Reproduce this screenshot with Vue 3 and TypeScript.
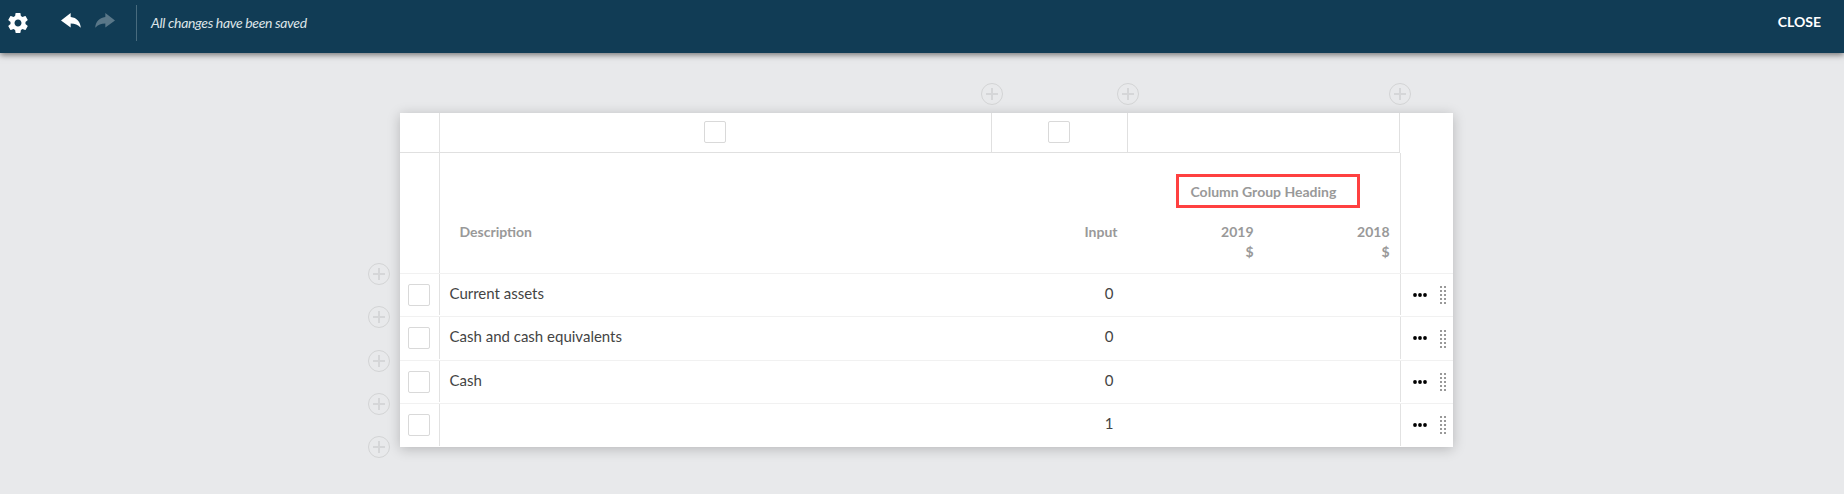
<script setup lang="ts">
interface Row {
  label: string
  input: string
}

const rows: Row[] = [
  { label: 'Current assets', input: '0' },
  { label: 'Cash and cash equivalents', input: '0' },
  { label: 'Cash', input: '0' },
  { label: '', input: '1' },
]
</script>

<template>
  <div class="page">
    <header class="topbar">
      <svg class="gear" viewBox="0 0 24 24" width="24" height="24">
        <path
          fill="#fff"
          d="M19.43 12.98c.04-.32.07-.64.07-.98s-.03-.66-.07-.98l2.11-1.65c.19-.15.24-.42.12-.64l-2-3.46c-.12-.22-.39-.3-.61-.22l-2.49 1c-.52-.4-1.08-.73-1.69-.98l-.38-2.65C14.46 2.18 14.25 2 14 2h-4c-.25 0-.46.18-.49.42l-.38 2.65c-.61.25-1.17.59-1.69.98l-2.49-1c-.23-.09-.49 0-.61.22l-2 3.46c-.13.22-.07.49.12.64l2.11 1.65c-.04.32-.07.65-.07.98s.03.66.07.98l-2.11 1.65c-.19.15-.24.42-.12.64l2 3.46c.12.22.39.3.61.22l2.49-1c.52.4 1.08.73 1.69.98l.38 2.65c.03.24.24.42.49.42h4c.25 0 .46-.18.49-.42l.38-2.65c.61-.25 1.17-.59 1.69-.98l2.49 1c.23.09.49 0 .61-.22l2-3.46c.12-.22.07-.49-.12-.64l-2.11-1.65zM12 15.5c-1.93 0-3.5-1.57-3.5-3.5s1.57-3.5 3.5-3.5 3.5 1.57 3.5 3.5-1.57 3.5-3.5 3.5z"
        />
      </svg>
      <svg class="undo" viewBox="3 5 18 15" width="20" height="15" preserveAspectRatio="none">
        <path fill="#fff" d="M11.7 9V5L3 12.4l8.7 7.2v-4.1c3.9 0 6.4 1.2 9.1 4.3-.3-5.8-3.5-10.2-9.1-10.8z" />
      </svg>
      <svg class="redo" viewBox="3 5 18 15" width="20" height="15" preserveAspectRatio="none">
        <path fill="#fff" d="M12.3 9V5l8.7 7.4-8.7 7.2v-4.1c-3.9 0-6.4 1.2-9.1 4.3.3-5.8 3.5-10.2 9.1-10.8z" />
      </svg>
      <span class="divider"></span>
      <span class="status">All changes have been saved</span>
      <span class="close">CLOSE</span>
    </header>

    <main class="sheet">
      <div class="selectors">
        <div class="cell gutter"></div>
        <div class="cell col-desc"><span class="check"></span><span class="plus"></span></div>
        <div class="cell col-input"><span class="check"></span><span class="plus"></span></div>
        <div class="cell col-group"><span class="plus"></span></div>
      </div>

      <div class="headings">
        <div class="gutter"></div>
        <div class="content">
          <div class="group-row"><div class="group">Column Group Heading</div></div>
          <div class="heading-row">
            <div class="h-desc">Description</div>
            <div class="h-num">Input</div>
            <div class="h-num">2019<br />$</div>
            <div class="h-num">2018<br />$</div>
          </div>
        </div>
      </div>

      <div v-for="(row, i) in rows" :key="i" class="row">
        <span class="plus"></span>
        <div class="gutter"><span class="check"></span></div>
        <div class="content">
          <span class="label">{{ row.label }}</span>
          <span class="value">{{ row.input }}</span>
        </div>
        <div class="tools">
          <svg class="more" width="14" height="4" viewBox="0 0 14 4">
            <circle cx="2" cy="2" r="1.9" />
            <circle cx="7" cy="2" r="1.9" />
            <circle cx="12" cy="2" r="1.9" />
          </svg>
          <span class="grip"><i v-for="n in 10" :key="n"></i></span>
        </div>
      </div>
      <span class="plus last"></span>
    </main>
  </div>
</template>

<style>
body {
  margin: 0;
  background: #e8e9eb;
}
</style>

<style scoped>
.page {
  height: 494px;
  overflow: hidden;
  background: #e8e9eb;
  font-family: Lato, 'Liberation Sans', sans-serif;
  font-size: 15px;
  color: #444;
}
.topbar {
  display: flex;
  align-items: flex-start;
  box-sizing: border-box;
  height: 53px;
  padding-left: 6px;
  background: #113c55;
  box-shadow: 0 2px 6px rgba(0, 0, 0, 0.5);
}
.gear {
  margin-top: 11px;
}
.undo {
  margin: 13px 0 0 31px;
}
.redo {
  margin: 13px 0 0 14px;
  opacity: 0.3;
}
.divider {
  width: 1px;
  height: 36px;
  margin: 5px 0 0 21px;
  background: #486b7e;
}
.status {
  margin: 14px 0 0 14px;
  font-size: 14px;
  line-height: 18px;
  font-style: italic;
  letter-spacing: -0.34px;
  color: #dde4e8;
}
.close {
  margin: 13px 23px 0 auto;
  font-size: 14px;
  line-height: 18px;
  font-weight: 700;
  color: #fff;
}
.sheet {
  position: relative;
  width: 1053px;
  height: 334px;
  margin: 60px 0 0 400px;
  background: #fff;
  box-shadow: 0 2px 12px rgba(0, 0, 0, 0.22);
}
.selectors {
  display: flex;
  width: 1000px;
  height: 40px;
}
.cell {
  position: relative;
  display: flex;
  justify-content: center;
  box-sizing: border-box;
  padding-top: 8px;
  border-right: 1px solid #e0e0e0;
  border-bottom: 1px solid #e0e0e0;
}
.gutter {
  flex: none;
  box-sizing: border-box;
  width: 40px;
  border-right: 1px solid #e2e2e2;
}
.col-desc {
  width: 552px;
  padding-right: 1px;
}
.col-input {
  width: 136px;
  padding-right: 1px;
}
.col-group {
  width: 272px;
}
.check {
  box-sizing: border-box;
  width: 22px;
  height: 22px;
  border: 1px solid #d9d9d9;
  border-radius: 2px;
  background: #fff;
}
.plus {
  position: absolute;
  box-sizing: border-box;
  width: 22px;
  height: 22px;
  border: 1px solid #d3d4d5;
  border-radius: 50%;
  background:
    linear-gradient(#d5d6d8, #d5d6d8) center / 12px 2px no-repeat,
    linear-gradient(#d5d6d8, #d5d6d8) center / 2px 12px no-repeat;
}
.cell .plus {
  top: -30px;
  right: -12px;
}
.row .plus {
  top: -11px;
  left: -32px;
}
.plus.last {
  bottom: -11px;
  left: -32px;
}
.headings {
  display: flex;
  height: 120px;
}
.content {
  box-sizing: border-box;
  width: 961px;
  border-right: 1px solid #e2e2e2;
}
.headings .content {
  font-weight: 700;
  line-height: 20px;
  font-size: 14px;
  color: #999;
}
.group-row {
  display: flex;
  justify-content: flex-end;
  padding: 21px 40px 0 0;
}
.group {
  box-sizing: border-box;
  width: 184px;
  height: 34px;
  padding: 5px 0 0 11.5px;
  border: 3px solid #ff4040;
  white-space: nowrap;
}
.heading-row {
  display: flex;
  padding: 14px 10.5px 0 19.5px;
}
.h-desc {
  flex: 1;
}
.h-num {
  width: 136px;
  text-align: right;
}
.row {
  position: relative;
  display: flex;
  box-sizing: border-box;
  height: 43px;
  padding-bottom: 1px;
  border-top: 1px solid #f1f1f1;
}
.row:nth-of-type(even) {
  height: 44px;
}
.row .gutter {
  padding: 10px 0 0 8px;
}
.row .check {
  display: block;
}
.row .content {
  display: flex;
  justify-content: space-between;
  padding: 9px 286.5px 0 9.5px;
  line-height: 20px;
}
.tools {
  display: flex;
  align-items: flex-start;
  padding: 19px 0 0 12px;
}
.grip {
  display: grid;
  grid-template-columns: 2px 2px;
  gap: 2px;
  margin: -7px 0 0 13px;
}
.row:nth-of-type(4) .grip {
  margin-top: -6px;
}
.grip i {
  width: 2px;
  height: 2px;
  background: #999;
}
</style>
